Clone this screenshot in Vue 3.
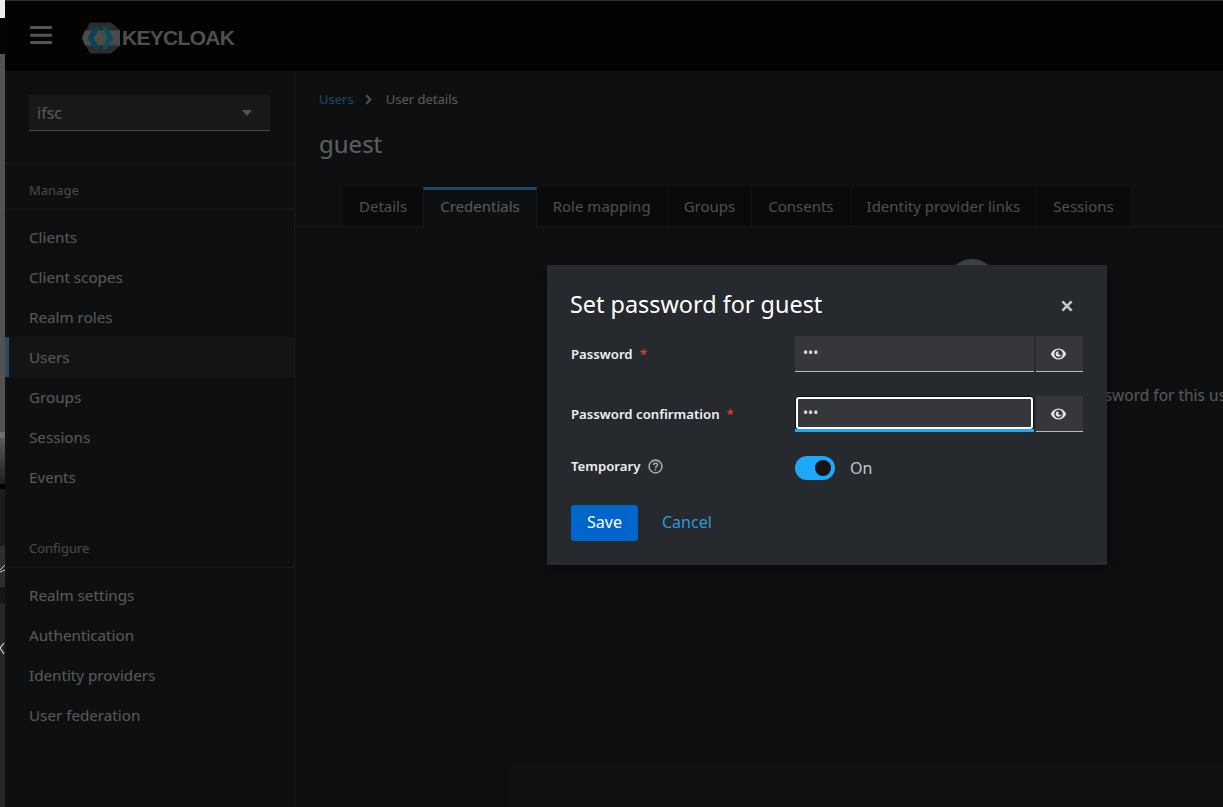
<template>
  <div class="page">
    <svg class="desktop-strip" width="5" height="807" viewBox="0 0 5 807">
      <defs>
        <linearGradient id="fade" x1="0" y1="0" x2="0" y2="1">
          <stop offset="0" stop-color="#5a5a5a" />
          <stop offset="1" stop-color="#1e1e1e" />
        </linearGradient>
      </defs>
      <rect width="5" height="807" fill="#1c1c1c" />
      <rect width="5" height="18" fill="#eeeeee" />
      <rect y="18" width="5" height="36" fill="#050505" />
      <rect y="54" width="5" height="378" fill="#525252" />
      <rect y="432" width="5" height="6" fill="#6e6e6e" />
      <rect y="438" width="5" height="46" fill="url(#fade)" />
      <rect y="484" width="5" height="5" fill="#000" />
      <rect y="546" width="5" height="41" fill="#2e2e2e" />
      <rect y="587" width="5" height="16" fill="#161616" />
      <rect y="603" width="5" height="204" fill="#252525" />
      <path d="M0 570 L5 565 M0 572 L5 570" stroke="#c8c8c8" fill="none" />
      <path d="M0 648 L4 643 M0 648 L4 654" stroke="#d8d8d8" stroke-width="1.2" fill="none" />
    </svg>

    <div class="console">
      <header class="masthead">
        <svg class="burger" width="22" height="18" viewBox="0 0 22 18">
          <rect y="0" width="22" height="3" rx="1" />
          <rect y="7.8" width="22" height="3" rx="1" />
          <rect y="15" width="22" height="3" rx="1" />
        </svg>
        <div class="logo">
          <svg width="38" height="32" viewBox="0 0 38 32">
            <polygon points="8,0.5 29,0.5 38,8 38,24 29,31.5 8,31.5 0,16" fill="#6e6e6e" />
            <polygon points="3,8.5 38,8.5 38,23.5 3,23.5 0,16" fill="#c0c0c0" />
            <path d="M18 5 L12 5 L5.5 16 L12 27 L18 27 L11.5 16 Z" fill="#12a8d4" />
            <path d="M20 5 L25 5 L31 16 L25 27 L20 27 L25.5 16 Z" fill="#1cc4f0" />
          </svg>
          <span class="logo-text">KEYCLOAK</span>
        </div>
      </header>

      <div class="body">
        <aside class="sidebar">
          <div class="realm-wrap">
            <div class="realm">
              <span>ifsc</span>
              <i class="caret"></i>
            </div>
          </div>
          <div class="nav-group">
            <div class="nav-title">Manage</div>
            <ul>
              <li v-for="item in manage" :key="item" :class="{ current: item === 'Users' }">{{ item }}</li>
            </ul>
          </div>
          <div class="nav-group configure">
            <div class="nav-title">Configure</div>
            <ul>
              <li v-for="item in configure" :key="item">{{ item }}</li>
            </ul>
          </div>
        </aside>

        <main class="main">
          <div class="crumbs">
            <a>Users</a>
            <svg width="7" height="11" viewBox="0 0 7 11"><path d="M1.2 1.2 L5.4 5.5 L1.2 9.8" fill="none" stroke="#ccc" stroke-width="2" /></svg>
            <span>User details</span>
          </div>
          <h1 class="user-name">guest</h1>
          <div class="tabs">
            <div
              v-for="tab in tabs"
              :key="tab"
              :class="['tab', { active: tab === 'Credentials' }]"
            >{{ tab }}</div>
          </div>
          <div class="empty">
            <div class="empty-icon"></div>
            <div class="empty-title">No credentials</div>
            <div class="empty-text">This user does not have any credentials. You can set a password for this user.</div>
          </div>
        </main>
      </div>
    </div>

    <div class="backdrop"></div>

    <div class="modal">
      <div class="modal-head">
        <h2>Set password for guest</h2>
        <svg class="close" width="12" height="12" viewBox="0 0 12 12">
          <path d="M1.4 1.4 L10.6 10.6 M10.6 1.4 L1.4 10.6" stroke="#c7c7c7" stroke-width="2.6" />
        </svg>
      </div>

      <div class="field pw">
        <label>Password <em>*</em></label>
        <div class="input-group">
          <div class="input">•••</div>
          <button class="eye">
            <svg width="17" height="12" viewBox="0 0 16 12">
              <path fill-rule="evenodd" d="M8 0.4 C4.6 0.4 1.7 2.6 0.2 6 C1.7 9.4 4.6 11.6 8 11.6 C11.4 11.6 14.3 9.4 15.8 6 C14.3 2.6 11.4 0.4 8 0.4 Z M8 10.2 A4.2 4.2 0 1 1 8 1.8 A4.2 4.2 0 0 1 8 10.2 Z" />
              <path d="M8 3.2 A2.8 2.8 0 1 0 10.8 6 A1.5 1.5 0 0 1 8 4.7 Z" />
            </svg>
          </button>
        </div>
      </div>

      <div class="field confirm">
        <label>Password confirmation <em>*</em></label>
        <div class="input-group">
          <div class="input focused">•••</div>
          <button class="eye">
            <svg width="17" height="12" viewBox="0 0 16 12">
              <path fill-rule="evenodd" d="M8 0.4 C4.6 0.4 1.7 2.6 0.2 6 C1.7 9.4 4.6 11.6 8 11.6 C11.4 11.6 14.3 9.4 15.8 6 C14.3 2.6 11.4 0.4 8 0.4 Z M8 10.2 A4.2 4.2 0 1 1 8 1.8 A4.2 4.2 0 0 1 8 10.2 Z" />
              <path d="M8 3.2 A2.8 2.8 0 1 0 10.8 6 A1.5 1.5 0 0 1 8 4.7 Z" />
            </svg>
          </button>
        </div>
      </div>

      <div class="field temp">
        <label>
          Temporary
          <svg class="help" width="15" height="15" viewBox="0 0 14 14">
            <circle cx="7" cy="7" r="6" fill="none" stroke="#a8a8a8" stroke-width="1.5" />
            <path d="M5.2 5.5 C5.2 3.4 8.9 3.4 8.9 5.5 C8.9 6.9 7 6.8 7 8.4" fill="none" stroke="#a8a8a8" stroke-width="1.4" />
            <rect x="6.3" y="9.3" width="1.4" height="1.4" fill="#a8a8a8" />
          </svg>
        </label>
        <div class="switch-row">
          <span class="switch"><i></i></span>
          <span class="switch-label">On</span>
        </div>
      </div>

      <div class="actions">
        <button class="save">Save</button>
        <a class="cancel">Cancel</a>
      </div>
    </div>
  </div>
</template>

<script setup>
const manage = ['Clients', 'Client scopes', 'Realm roles', 'Users', 'Groups', 'Sessions', 'Events']
const configure = ['Realm settings', 'Authentication', 'Identity providers', 'User federation']
const tabs = ['Details', 'Credentials', 'Role mapping', 'Groups', 'Consents', 'Identity provider links', 'Sessions']
</script>

<style>
html, body { margin: 0; background: #0d0e10; overflow: hidden; }
</style>

<style scoped>
.page {
  position: relative;
  width: 1223px;
  height: 807px;
  overflow: hidden;
  font-family: "Noto Sans", "Open Sans", sans-serif;
  color: #e0e0e0;
}

.desktop-strip {
  position: absolute;
  left: 0;
  top: 0;
  z-index: 3;
  display: block;
}

.console { display: flex; flex-direction: column; height: 807px; }

.masthead {
  height: 71px;
  flex: none;
  background: #030303;
  border-top: 1px solid #7b8471;
  box-sizing: border-box;
  display: flex;
  align-items: center;
  padding: 0 0 0 30px;
}
.burger { fill: #d8d8d8; margin-right: 30px; margin-top: -3px; }
.logo { display: flex; align-items: center; margin-top: 4px; }
.logo svg { display: block; }
.logo-text {
  font-family: "Liberation Sans", sans-serif;
  font-weight: 700;
  font-size: 21px;
  letter-spacing: -0.7px;
  color: #c9c9c9;
  margin-left: 2px;
}

.body { display: flex; flex: 1; min-height: 0; }

.sidebar {
  width: 295px;
  flex: none;
  box-sizing: border-box;
  padding-left: 5px;
  background: #212427;
  border-right: 1px solid #3c3f42;
}
.realm-wrap {
  padding: 24px 24px 32px;
  border-bottom: 1px solid #3c3f42;
}
.realm {
  height: 36px;
  box-sizing: border-box;
  background: #3c3c3c;
  border-bottom: 1px solid #b8bbbe;
  display: flex;
  align-items: center;
  justify-content: space-between;
  padding: 0 18px 0 8px;
  font-size: 16px;
}
.caret {
  width: 0;
  height: 0;
  border-left: 5px solid transparent;
  border-right: 5px solid transparent;
  border-top: 6px solid #d2d2d2;
}
.nav-group ul { list-style: none; margin: 0; padding: 7px 0 0; }
.nav-group li {
  height: 40px;
  line-height: 40px;
  padding-left: 24px;
  font-size: 15.2px;
  color: #e0e0e0;
}
.nav-group li.current {
  background: #2d3034;
  box-shadow: inset 4px 0 0 #73bcf7;
}
.nav-title {
  height: 46px;
  line-height: 52px;
  padding-left: 24px;
  font-size: 13px;
  color: #b8bbbe;
  border-bottom: 1px solid #3c3f42;
  box-sizing: border-box;
}
.configure { margin-top: 25px; }

.main { flex: 1; min-width: 0; overflow: hidden; background: #212427; }
.crumbs {
  display: flex;
  align-items: center;
  gap: 11px;
  padding: 19px 0 0 24px;
  height: 18px;
  font-size: 13px;
  white-space: nowrap;
}
.crumbs a { color: #45b8ff; }
.crumbs span { color: #e0e0e0; margin-left: 3px; }
.user-name {
  margin: 20px 0 0 24px;
  font-size: 24px;
  line-height: 32px;
  font-weight: 400;
  color: #f0f0f0;
}
.tabs {
  display: flex;
  margin-top: 27px;
  padding-left: 48px;
  height: 39px;
  border-bottom: 1px solid #3c3f42;
}
.tab {
  height: 39px;
  line-height: 38px;
  padding: 0 16px;
  font-size: 15px;
  background: #151515;
  border-right: 1px solid #2e2e2e;
  color: #c7c7c7;
  white-space: nowrap;
}
.tab:last-child { border-right: 0; }
.tab.active {
  background: #212427;
  color: #e0e0e0;
  border-top: 3px solid #45b8ff;
  border-left: 1px solid #3c3f42;
  border-right: 1px solid #3c3f42;
  border-bottom: 1px solid #212427;
  margin-left: -1px;
  line-height: 32px;
  box-sizing: border-box;
  height: 40px;
}
.empty {
  width: 1354px;
  text-align: center;
  padding-top: 32px;
}
.empty-icon {
  width: 52px;
  height: 52px;
  border-radius: 50%;
  background: #a8a8a8;
  margin: 0 auto;
}
.empty-title { font-size: 20px; margin-top: 30px; }
.empty-text {
  font-size: 15.5px;
  margin: 16px 0 0 -16px;
  white-space: nowrap;
  color: #e0e0e0;
}

.backdrop {
  position: absolute;
  inset: 0;
  background: rgba(3, 3, 3, 0.62);
  z-index: 1;
}

.modal {
  position: absolute;
  left: 547px;
  top: 265px;
  width: 560px;
  height: 300px;
  box-sizing: border-box;
  z-index: 2;
  background: #26292d;
  padding: 23px 24px 0 23px;
  box-shadow: 0 8px 16px rgba(3, 3, 3, 0.4);
}
.modal-head {
  display: flex;
  align-items: center;
  justify-content: space-between;
  height: 32px;
}
.modal-head h2 {
  margin: 0;
  font-size: 23.4px;
  font-weight: 400;
  color: #fff;
  line-height: 32px;
}
.close { margin-right: 10px; margin-top: 4px; }

.field { display: flex; align-items: flex-start; }
.field label {
  width: 225px;
  padding-left: 1px;
  box-sizing: border-box;
  flex: none;
  font-size: 13.2px;
  font-weight: 600;
  color: #f0f0f0;
  display: flex;
  align-items: center;
  gap: 5px;
}
.field label em { color: #e03e30; font-style: normal; margin-left: 2px; }
.pw { margin-top: 16px; }
.pw label { margin-top: 9px; }
.confirm { margin-top: 24px; }
.confirm label { margin-top: 9px; }
.temp { margin-top: 25px; }
.temp label { margin-top: 0; gap: 8px; }

.input-group { display: flex; gap: 2px; }
.input {
  position: relative;
  width: 239px;
  height: 36px;
  box-sizing: border-box;
  background: #36373a;
  border-bottom: 1px solid #b8bbbe;
  padding: 0 8px;
  line-height: 34px;
  font-size: 13.5px;
  color: #e0e0e0;
}
.input.focused { border-bottom: 3px solid #1fa7f8; }
.input.focused::after {
  content: "";
  position: absolute;
  left: 1px;
  right: 1px;
  top: 1px;
  bottom: 0;
  border: 2px solid #fff;
  border-radius: 3px;
  box-shadow: -1px 0 0 #101010, 1px 0 0 #101010, 0 -1px 0 #101010;
}
.eye {
  width: 47px;
  height: 36px;
  padding: 0 2px 0 0;
  border: 0;
  border-bottom: 1px solid #b8bbbe;
  background: #36373a;
  display: flex;
  align-items: center;
  justify-content: center;
}
.eye svg { fill: #e0e0e0; }

.switch-row { display: flex; align-items: center; gap: 15px; margin-top: -1px; }
.switch {
  width: 40px;
  height: 24px;
  border-radius: 12px;
  background: #1fa7f8;
  position: relative;
  display: block;
}
.switch i {
  position: absolute;
  right: 4px;
  top: 4px;
  width: 16px;
  height: 16px;
  border-radius: 50%;
  background: #151515;
}
.switch-label { font-size: 16px; color: #c7c7c7; }

.actions { display: flex; align-items: center; margin-top: 25px; padding-left: 1px; }
.save {
  width: 67px;
  height: 36px;
  border: 0;
  border-radius: 3px;
  background: #0066cc;
  color: #fff;
  font: inherit;
  font-size: 16px;
  line-height: 34px;
  padding: 0 0 2px;
}
.cancel { margin-left: 24px; margin-top: -2px; font-size: 16px; color: #2c9ad9; }
</style>
